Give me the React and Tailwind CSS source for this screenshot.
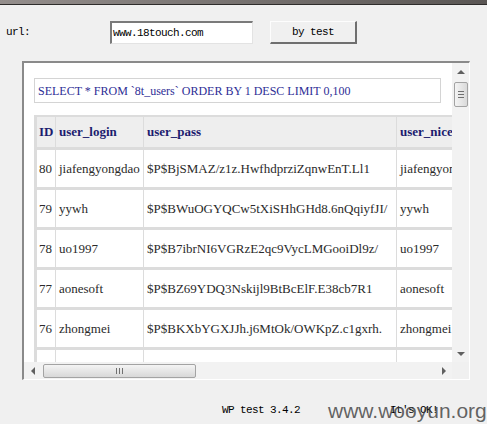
const rows = [
  ["80", "jiafengyongdao", "$P$BjSMAZ/z1z.HwfhdprziZqnwEnT.Ll1", "jiafengyongdao"],
  ["79", "yywh", "$P$BWuOGYQCw5tXiSHhGHd8.6nQqiyfJI/", "yywh"],
  ["78", "uo1997", "$P$B7ibrNI6VGRzE2qc9VycLMGooiDl9z/", "uo1997"],
  ["77", "aonesoft", "$P$BZ69YDQ3Nskijl9BtBcElF.E38cb7R1", "aonesoft"],
  ["76", "zhongmei", "$P$BKXbYGXJJh.j6MtOk/OWKpZ.c1gxrh.", "zhongmei"],
  ["75", "ccpcofc", "$P$BFM6K.FIP$F4E08WA....66K01.1.02l/", "ccpcofc"],
];

const mono = "font-['Liberation_Mono',monospace] text-[11px] tracking-[-0.6px] text-black";
const serif = "font-['Liberation_Serif','Times_New_Roman',serif] text-[13px]";

function Arrow({ dir }) {
  const pts = {
    up: "0,4 4,0 8,4",
    down: "0,0 8,0 4,4",
    left: "4,0 4,8 0,4",
    right: "0,0 0,8 4,4",
  }[dir];
  const vertical = dir === "up" || dir === "down";
  return (
    <svg width={vertical ? 8 : 4} height={vertical ? 4 : 8} viewBox={vertical ? "0 0 8 4" : "0 0 4 8"}>
      <polygon points={pts} fill="#606060" />
    </svg>
  );
}

export default function App() {
  return (
    <div className="relative w-[487px] h-[424px] overflow-hidden bg-[#f0f0f0]">
      {/* title bar strip */}
      <div className="h-[4px] bg-gradient-to-r from-[#948e8c] to-[#5a5654]" />
      <div className="h-px bg-[#2e2c2b]" />

      {/* url row */}
      <div className="flex items-center h-[23px] mt-[16px]">
        <span className={`${mono} ml-[6px] w-[104px]`}>url:</span>
        <div className="w-[143px] h-[23px] bg-white border-t-2 border-l-2 border-[#7a7a7a] border-r border-b border-r-[#e3e3e3] border-b-[#e3e3e3] flex items-center">
          <span className={`${mono} pl-[1px]`}>www.18touch.com</span>
        </div>
        <div className="ml-[17px] w-[87px] h-[23px] bg-[#f0f0f0] border border-t-[#fdfdfd] border-l-[#fdfdfd] border-r-2 border-b-2 border-r-[#6f6f6f] border-b-[#6f6f6f] flex items-center justify-center">
          <span className={mono}>by test</span>
        </div>
      </div>

      {/* browser control */}
      <div className="ml-[22px] mt-[17px] w-[448px] border-t-2 border-l-2 border-[#8a8a8a] border-r border-b border-r-white border-b-white">
        <div className="flex">
          <div className="w-[428px] h-[299px] overflow-hidden bg-white">
            <div className="pl-[10px] pt-[15px]">
              <div className="font-['Liberation_Serif','Times_New_Roman',serif] text-[12px] w-[407px] h-[25px] border border-[#d4d4d4] flex items-center pl-[3px] text-[#2e2e96]">
                SELECT * FROM `8t_users` ORDER BY 1 DESC LIMIT 0,100
              </div>
              <div className="mt-[12px] w-[600px] bg-[#dcdcdc] border-l-[3px] border-t-[2px] border-[#dcdcdc]">
                <div className={`${serif} flex gap-px h-[30px] font-bold text-[#1c1c6e]`}>
                  <div className="w-[18px] bg-[#eeeeee] flex items-center pl-[2px]">ID</div>
                  <div className="w-[87px] bg-[#eeeeee] flex items-center pl-[3px]">user_login</div>
                  <div className="w-[252px] bg-[#eeeeee] flex items-center pl-[3px]">user_pass</div>
                  <div className="flex-1 bg-[#eeeeee] flex items-center pl-[3px]">user_nicename</div>
                </div>
                {rows.map((r) => (
                  <div key={r[0]} className={`${serif} flex gap-px h-[37px] mt-[3px] text-[#2a2a2a]`}>
                    <div className="w-[18px] bg-white flex items-center pl-[2px]">{r[0]}</div>
                    <div className="w-[87px] bg-white flex items-center pl-[3px]">{r[1]}</div>
                    <div className="w-[252px] bg-white flex items-center pl-[3px] whitespace-nowrap">{r[2]}</div>
                    <div className="flex-1 bg-white flex items-center pl-[3px]">{r[3]}</div>
                  </div>
                ))}
              </div>
            </div>
          </div>

          {/* vertical scrollbar */}
          <div className="w-[17px] h-[299px] bg-[#f2f2f2] flex flex-col items-center">
            <div className="h-[17px] flex items-center justify-center">
              <Arrow dir="up" />
            </div>
            <div className="mt-[2px] w-[14px] h-[25px] rounded-[2px] border border-[#a3a3a3] bg-gradient-to-r from-[#f4f4f4] to-[#dadada] flex flex-col items-center justify-center gap-[2px]">
              <div className="w-[6px] h-px bg-[#707070]" />
              <div className="w-[6px] h-px bg-[#707070]" />
              <div className="w-[6px] h-px bg-[#707070]" />
            </div>
            <div className="flex-1" />
            <div className="h-[17px] flex items-center justify-center">
              <Arrow dir="down" />
            </div>
          </div>
        </div>

        <div className="flex">
          {/* horizontal scrollbar */}
          <div className="w-[428px] h-[17px] bg-[#f2f2f2] flex items-center">
            <div className="w-[17px] flex items-center justify-center">
              <Arrow dir="left" />
            </div>
            <div className="ml-[2px] w-[153px] h-[14px] rounded-[2px] border border-[#a3a3a3] bg-gradient-to-b from-[#f4f4f4] to-[#d8d8d8] flex items-center justify-center gap-[2px]">
              <div className="w-px h-[6px] bg-[#707070]" />
              <div className="w-px h-[6px] bg-[#707070]" />
              <div className="w-px h-[6px] bg-[#707070]" />
            </div>
            <div className="flex-1" />
            <div className="w-[17px] flex items-center justify-center">
              <Arrow dir="right" />
            </div>
          </div>
          <div className="w-[17px] h-[17px] bg-[#f0f0f0]" />
        </div>
      </div>

      {/* footer */}
      <div className="flex mt-[24px] h-[12px] items-center">
        <span className={`${mono} ml-[222px]`}>WP test 3.4.2</span>
        <span className={`${mono} ml-[90px]`}>It's OK!</span>
      </div>

      <div className="absolute left-[328px] top-[398px] font-['Liberation_Sans',Arial,sans-serif] text-[21px] leading-[26px] text-[#3c3c3c]/80">
        www.wooyun.org
      </div>
    </div>
  );
}
